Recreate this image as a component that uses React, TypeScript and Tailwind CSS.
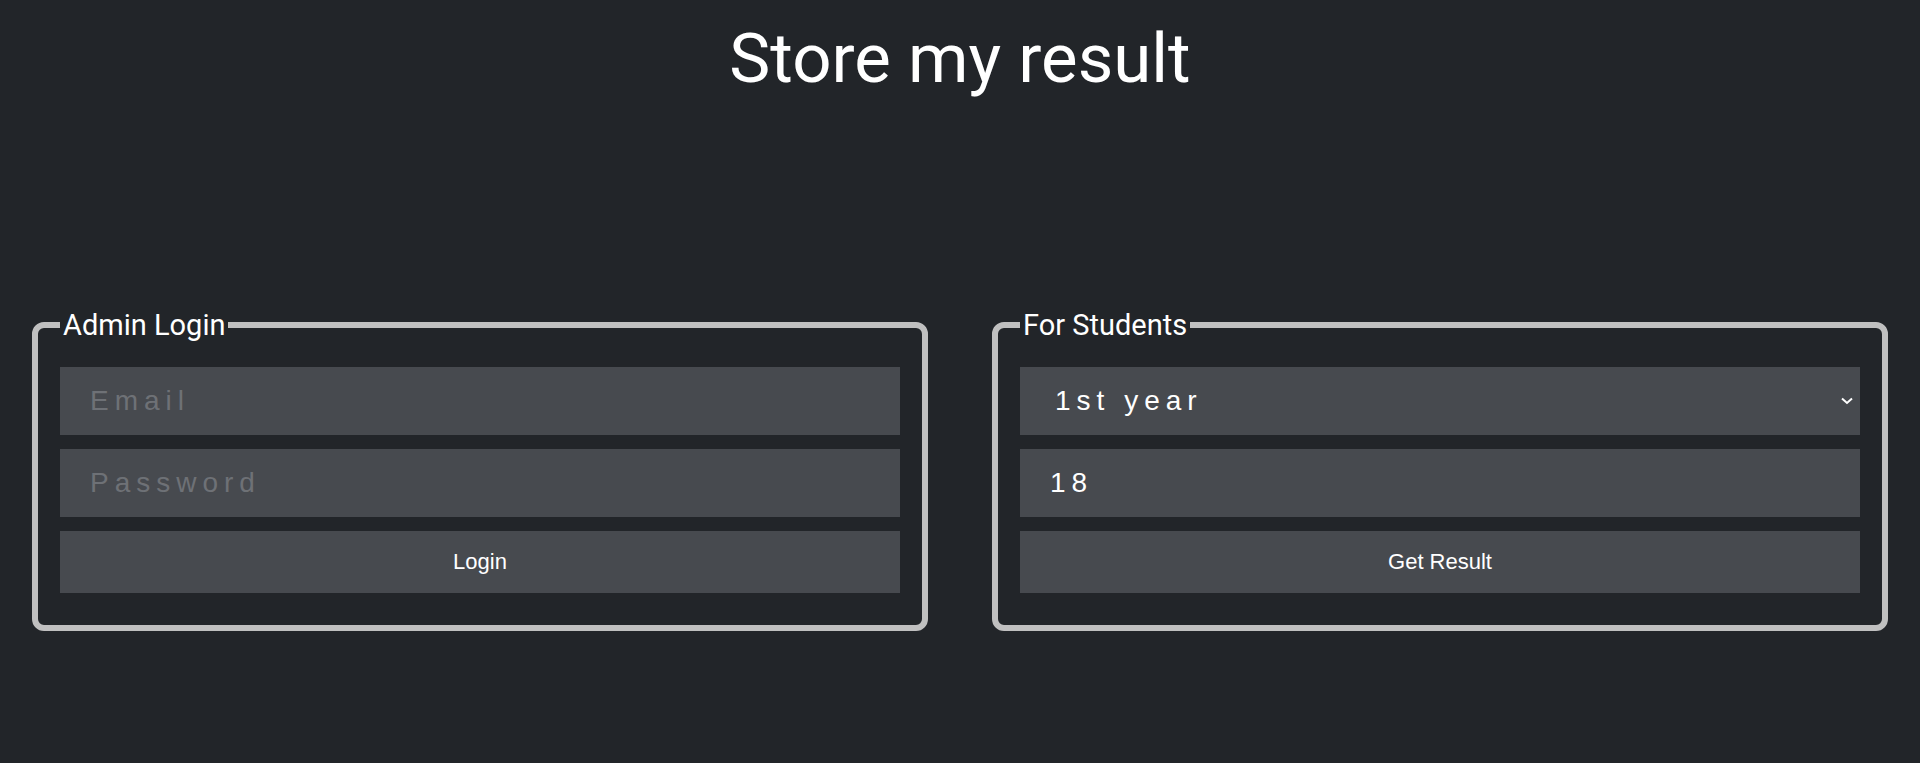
import { useState } from 'react'

export default function App() {
  const [email, setEmail] = useState('')
  const [password, setPassword] = useState('')
  const [year, setYear] = useState('1')
  const [roll, setRoll] = useState('18')

  return (
    <div className="min-h-screen bg-[#222529] text-white">
      <h1 className="pt-[18px] text-center text-[69px] leading-[81px] font-normal font-['Roboto',sans-serif]">
        Store my result
      </h1>

      <div className="mt-[209px] flex">
        <div className="w-1/2">
          <fieldset className="mx-8 rounded-[12px] border-[6px] border-[#c0c0c0] px-[22px] pt-[25px] pb-[32px]">
            <legend className="px-[3px] text-[29px] leading-[34px] font-['Roboto',sans-serif]">Admin Login</legend>
            <div className="flex flex-col gap-[14px] font-['Liberation_Sans',Arial,sans-serif]">
              <input
                type="email"
                placeholder="Email"
                value={email}
                onChange={(e) => setEmail(e.target.value)}
                className="h-[68px] bg-[#474a4f] px-[30px] text-[28px] tracking-[6px] text-white outline-none placeholder:text-[#6e7176]"
              />
              <input
                type="password"
                placeholder="Password"
                value={password}
                onChange={(e) => setPassword(e.target.value)}
                className="h-[68px] bg-[#474a4f] px-[30px] text-[28px] tracking-[6px] text-white outline-none placeholder:text-[#6e7176]"
              />
              <button className="h-[62px] bg-[#474a4f] pb-[2px] text-[22px] text-white">Login</button>
            </div>
          </fieldset>
        </div>

        <div className="w-1/2">
          <fieldset className="mx-8 rounded-[12px] border-[6px] border-[#c0c0c0] px-[22px] pt-[25px] pb-[32px]">
            <legend className="px-[3px] text-[29px] leading-[34px] font-['Roboto',sans-serif]">For Students</legend>
            <div className="flex flex-col gap-[14px] font-['Liberation_Sans',Arial,sans-serif]">
              <div className="relative">
                <select
                  value={year}
                  onChange={(e) => setYear(e.target.value)}
                  className="h-[68px] w-full appearance-none bg-[#474a4f] pl-[35px] pr-[40px] text-[28px] tracking-[6px] text-white outline-none"
                >
                  <option value="1">1st year</option>
                  <option value="2">2nd year</option>
                  <option value="3">3rd year</option>
                  <option value="4">4th year</option>
                </select>
                <svg
                  className="pointer-events-none absolute right-[7px] top-1/2 h-[8px] w-[12px] -translate-y-1/2"
                  viewBox="0 0 12 8"
                  fill="none"
                  stroke="white"
                  strokeWidth="2"
                >
                  <path d="M1 1.5 L6 6 L11 1.5" />
                </svg>
              </div>
              <input
                type="number"
                value={roll}
                onChange={(e) => setRoll(e.target.value)}
                className="h-[68px] bg-[#474a4f] px-[30px] text-[28px] tracking-[6px] text-white outline-none [appearance:textfield]"
              />
              <button className="h-[62px] bg-[#474a4f] pb-[2px] text-[22px] text-white">Get Result</button>
            </div>
          </fieldset>
        </div>
      </div>
    </div>
  )
}
